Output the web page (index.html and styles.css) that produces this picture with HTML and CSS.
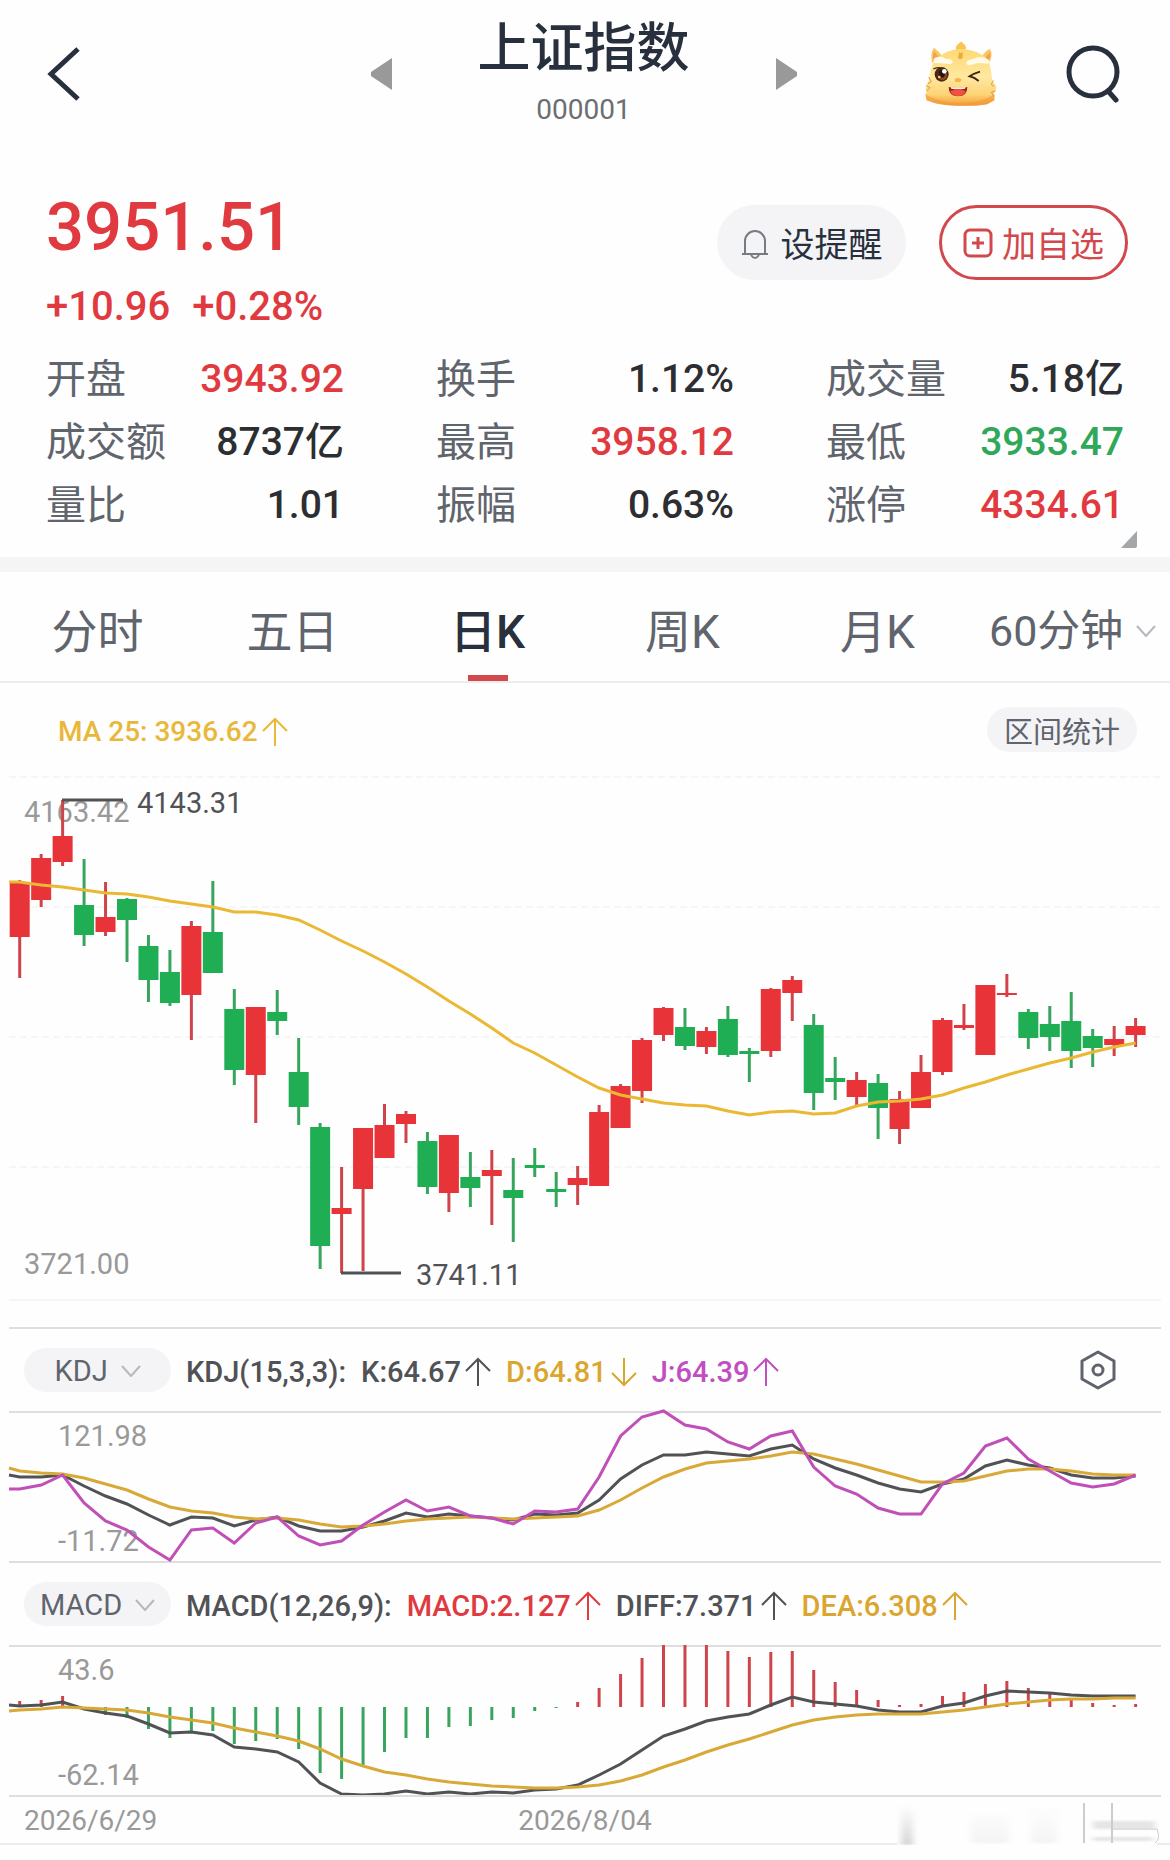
FILE: index.html
```html
<!DOCTYPE html>
<html lang="zh-CN">
<head>
    <meta charset="UTF-8">
    <meta name="viewport" content="width=device-width, initial-scale=1.0">
    <title>上证指数 000001</title>
    <link rel="stylesheet" href="styles.css">
</head>
<body>
    <!-- Shared icons -->
    <svg class="sprite" aria-hidden="true">
        <symbol id="up" viewBox="0 0 26 30"><path d="M13 29V2M1 14L13 2l12 12" fill="none" stroke="currentColor" stroke-width="2"/></symbol>
        <symbol id="down" viewBox="0 0 26 30"><path d="M13 1v27M1 16l12 12 12-12" fill="none" stroke="currentColor" stroke-width="2"/></symbol>
        <symbol id="chevron" viewBox="0 0 20 12"><path d="M1 1l9 10 9-10" fill="none" stroke="currentColor" stroke-width="2"/></symbol>
    </svg>

    <header class="header">
        <button class="icon-btn" aria-label="返回">
            <svg width="33" height="56" viewBox="0 0 33 56"><path d="M31 3L4 28l27 25" fill="none" stroke="#27303c" stroke-width="5"/></svg>
        </button>
        <div class="title-nav">
            <button class="icon-btn" aria-label="上一个">
                <svg width="21" height="32" viewBox="0 0 21 32"><path d="M21 0v32L0 18q-1-2 0-4z" fill="#999"/></svg>
            </button>
            <div class="title">
                <h1>上证指数</h1>
                <p>000001</p>
            </div>
            <button class="icon-btn" aria-label="下一个">
                <svg width="21" height="32" viewBox="0 0 21 32"><path d="M0 0v32l21-14q1-2 0-4z" fill="#999"/></svg>
            </button>
        </div>
        <div class="header-tools">
            <button class="icon-btn" aria-label="助手">
                <svg width="74" height="66" viewBox="0 0 222 198">
                    <defs>
                        <linearGradient id="face" x1="0" y1="0" x2="0" y2="1">
                            <stop offset="0" stop-color="#ffd873"/>
                            <stop offset=".5" stop-color="#ffe8a0"/>
                            <stop offset=".8" stop-color="#fdd476"/>
                            <stop offset="1" stop-color="#f49a35"/>
                        </linearGradient>
                    </defs>
                    <path d="M24 66Q18 36 30 20q14 10 24 26zM196 66q12-26 2-42-16 6-26 26z" fill="#fbc45f"/>
                    <path d="M28 60q-3-20 3-28l14 18zM193 60q8-16 5-26l-14 16z" fill="#f2a052"/>
                    <path d="M96 26q-3-12 10-20 6-8 10 0 14 8 8 22z" fill="#f8c557"/>
                    <path d="M30 60Q60 26 110 24q56 2 84 34 8 30 12 66 14 6 10 22l-6 12 2 20-22 12Q150 196 112 194 50 196 8 178L4 160l4-6q-8-18 6-34 4-32 16-60z" fill="url(#face)"/>
                    <path d="M4 160q34 22 100 26 70 0 108-26l-2 18-22 12Q150 196 112 194 50 196 8 178z" fill="#f29a3a" opacity=".6"/>
                    <path d="M14 108l8 14-10 6M8 134l10 6-10 10M208 118l-6 12 8 6M214 150l-12 4 8 12" fill="none" stroke="#d99a33" stroke-width="3"/>
                    <path d="M106 32q6 8 10 0v18q-8 8-14 0z" fill="#e9ad3c"/>
                    <path d="M30 66q-6-16 12-18 14-2 24 6 18-2 20 8 0 8-14 7-20-3-42-3zM128 70q-4-10 10-14 14-2 22-7 24-3 36 10 4 10-10 9-24-6-44 4-10 2-14-2z" fill="#fffbe9"/>
                    <path d="M28 84q8-4 20-4" fill="none" stroke="#4b2815" stroke-width="4"/>
                    <ellipse cx="53" cy="100" rx="21" ry="22" fill="#4b2815"/>
                    <ellipse cx="55" cy="103" rx="14" ry="15" fill="#8d4b1e"/>
                    <ellipse cx="53" cy="99" rx="10" ry="11" fill="#2b1510"/>
                    <circle cx="61" cy="91" r="7" fill="#fff"/>
                    <circle cx="46" cy="108" r="4" fill="#f5c58b"/>
                    <path d="M168 92q-20 6-31 14 14 3 27 14" fill="none" stroke="#3d2413" stroke-width="6"/>
                    <ellipse cx="102" cy="117" rx="10" ry="6" fill="#f5b54c"/>
                    <path d="M74 138q28 6 56 0 0 28-28 28T74 138z" fill="#a31d1c"/>
                    <path d="M80 138q22 4 45 0l-2 5q-20 4-41 0z" fill="#fff3e0"/>
                    <path d="M79 150q22-8 46 0-4 15-23 15t-23-15z" fill="#f0523f"/>
                </svg>
            </button>
            <button class="icon-btn" aria-label="搜索">
                <svg width="54" height="58" viewBox="0 0 54 58"><circle cx="27" cy="27" r="24" fill="none" stroke="#27303c" stroke-width="5"/><path d="M42 46l8 9" stroke="#27303c" stroke-width="5" stroke-linecap="round"/></svg>
            </button>
        </div>
    </header>

    <section class="quote">
        <div class="quote-top">
            <div>
                <div class="price">3951.51</div>
                <div class="change"><span>+10.96</span><span>+0.28%</span></div>
            </div>
            <div class="actions">
                <button class="btn btn-alert">
                    <svg width="28" height="32" viewBox="0 0 28 32" fill="none" stroke="#777b82" stroke-width="2"><path d="M1 27h26M4 27V14a10 10 0 0 1 20 0v13M10 28q4 6 8 0"/></svg>
                    设提醒
                </button>
                <button class="btn btn-add">
                    <svg width="30" height="30" viewBox="0 0 30 30" fill="none" stroke="currentColor" stroke-width="3"><rect x="2" y="2" width="26" height="26" rx="5"/><path d="M15 9v12M9 15h12"/></svg>
                    加自选
                </button>
            </div>
        </div>
        <dl class="stats">
            <div><dt>开盘</dt><dd class="up">3943.92</dd></div>
            <div><dt>换手</dt><dd>1.12%</dd></div>
            <div><dt>成交量</dt><dd>5.18亿</dd></div>
            <div><dt>成交额</dt><dd>8737亿</dd></div>
            <div><dt>最高</dt><dd class="up">3958.12</dd></div>
            <div><dt>最低</dt><dd class="down">3933.47</dd></div>
            <div><dt>量比</dt><dd>1.01</dd></div>
            <div><dt>振幅</dt><dd>0.63%</dd></div>
            <div><dt>涨停</dt><dd class="up">4334.61</dd></div>
        </dl>
        <svg class="corner" width="16" height="17" viewBox="0 0 16 17"><path d="M16 0v15q0 2-2 2H0z" fill="#a3a7a9"/></svg>
    </section>

    <nav class="tabs">
        <button>分时</button>
        <button>五日</button>
        <button class="active">日K</button>
        <button>周K</button>
        <button>月K</button>
        <label class="picker">
            <select aria-label="分钟周期"><option>60分钟</option></select>
            <svg width="20" height="12"><use href="#chevron"/></svg>
        </label>
    </nav>

    <main class="charts">
        <div class="ma-row">
            <span class="reading gold">MA 25: 3936.62<svg width="26" height="30"><use href="#up"/></svg></span>
            <button class="range-btn">区间统计</button>
        </div>
        <svg id="kline" class="plot" viewBox="9 752 1152 575" role="img" aria-label="日K线图"></svg>

        <div class="panel-head">
            <label class="picker pill">
                <select aria-label="指标一"><option>KDJ</option></select>
                <svg width="20" height="12"><use href="#chevron"/></svg>
            </label>
            <span class="reading">KDJ(15,3,3):</span>
            <span class="reading">K:64.67<svg width="26" height="30"><use href="#up"/></svg></span>
            <span class="reading amber">D:64.81<svg width="26" height="30"><use href="#down"/></svg></span>
            <span class="reading purple">J:64.39<svg width="26" height="30"><use href="#up"/></svg></span>
            <button class="icon-btn settings" aria-label="指标设置">
                <svg width="36" height="40" viewBox="0 0 36 40" fill="none" stroke="#5d646e" stroke-width="3" stroke-linejoin="round"><path d="M18 2l16 9v18l-16 9-16-9V11z"/><circle cx="18" cy="20" r="5"/></svg>
            </button>
        </div>
        <svg id="kdj" class="plot" viewBox="9 1413 1152 148" role="img" aria-label="KDJ"></svg>

        <div class="panel-head">
            <label class="picker pill">
                <select aria-label="指标二"><option>MACD</option></select>
                <svg width="20" height="12"><use href="#chevron"/></svg>
            </label>
            <span class="reading">MACD(12,26,9):</span>
            <span class="reading red">MACD:2.127<svg width="26" height="30"><use href="#up"/></svg></span>
            <span class="reading">DIFF:7.371<svg width="26" height="30"><use href="#up"/></svg></span>
            <span class="reading amber">DEA:6.308<svg width="26" height="30"><use href="#up"/></svg></span>
        </div>
        <svg id="macd" class="plot" viewBox="9 1647 1152 148" role="img" aria-label="MACD"></svg>
    </main>

    <footer class="dates">
        <span>2026/6/29</span>
        <span>2026/8/04</span>
        <svg class="smudge" width="264" height="48" viewBox="0 0 264 48">
            <defs>
                <filter id="soft"><feGaussianBlur stdDeviation="3 1"/></filter>
                <linearGradient id="fade" x1="0" y1="0" x2="0" y2="1">
                    <stop offset="0" stop-color="#bbb" stop-opacity="0"/>
                    <stop offset="1" stop-color="#bbb" stop-opacity=".6"/>
                </linearGradient>
            </defs>
            <rect width="260" height="46" fill="#fefefe"/>
            <g filter="url(#soft)">
                <rect x="4" y="4" width="12" height="40" fill="url(#fade)"/>
                <path d="M74 14h38v28H74zM134 6h26v36h-26z" fill="url(#fade)" opacity=".25"/>
                <path d="M196 20h62v8h-62zM196 36h60v4h-60z" fill="#ccc" opacity=".5"/>
            </g>
            <path d="M187 2v40M215 2v40" stroke="#ccc" stroke-width="2"/>
            <path d="M216 28h44q4 10-2 14" fill="none" stroke="#ccc" stroke-width="1"/>
        </svg>
    </footer>

    <script src="charts.js"></script>
</body>
</html>
```
FILE: styles.css
```css
:root {
    --red: #e03a40;
    --green: #2fa85a;
    --dark: #27303c;
    --grey: #60656d;
    --amber: #dba62f;
    --pill: #f4f4f7;
    --rule: #dedede;
}

* {
    margin: 0;
    padding: 0;
    box-sizing: border-box;
}

body {
    font-family: Roboto, "Noto Sans CJK SC", sans-serif;
    background-color: #fefefe;
    color: #2c2e31;
}

button, select {
    font: inherit;
    color: inherit;
    background: none;
    border: none;
    cursor: pointer;
}

svg {
    display: block;
    flex-shrink: 0;
}

.sprite {
    position: absolute;
    width: 0;
    height: 0;
}

/* Header */
.header {
    display: grid;
    grid-template-columns: 1fr auto 1fr;
    align-items: center;
    padding: 20px 50px 0 47px;
}

.icon-btn {
    justify-self: start;
}

.title-nav {
    display: flex;
    align-items: center;
    gap: 86px;
}

.title {
    text-align: center;
}

.title h1 {
    margin-bottom: 14px;
    font-size: 53px;
    line-height: 58px;
    font-weight: 500;
    color: var(--dark);
}

.title p {
    font-size: 28px;
    line-height: 36px;
    color: #6b6e73;
}

.header-tools {
    display: flex;
    align-items: center;
    justify-content: flex-end;
    gap: 68px;
}

/* Quote */
.quote {
    position: relative;
    padding: 61px 46px 20px;
    border-bottom: 15px solid #f5f5f5;
}

.quote-top {
    display: flex;
    justify-content: space-between;
}

.price {
    margin-bottom: 20px;
    font-size: 67px;
    line-height: 76px;
    font-weight: 500;
    color: var(--red);
}

.change {
    display: flex;
    gap: 22px;
    font-size: 40px;
    line-height: 44px;
    font-weight: 500;
    color: var(--red);
}

.actions {
    display: flex;
    gap: 33px;
    margin: 16px -4px 0 0;
}

.btn {
    display: flex;
    align-items: center;
    justify-content: center;
    gap: 12px;
    width: 189px;
    height: 75px;
    border-radius: 38px;
    font-size: 34px;
    color: var(--dark);
}

.btn-alert {
    background-color: var(--pill);
}

.btn-add {
    gap: 9px;
    border: 3px solid #d2484d;
    color: #d2484d;
}

.stats {
    display: grid;
    grid-template-columns: repeat(3, 1fr);
    column-gap: 92px;
    margin-top: 19px;
    font-size: 40px;
    line-height: 63px;
}

.stats div {
    display: flex;
    justify-content: space-between;
}

.stats dt {
    color: var(--grey);
}

.stats dd {
    font-size: 39px;
    font-weight: 500;
}

.stats .up {
    color: var(--red);
}

.stats .down {
    color: var(--green);
}

.corner {
    position: absolute;
    right: 33px;
    bottom: 9px;
}

/* Period tabs */
.tabs {
    display: grid;
    grid-template-columns: repeat(6, 1fr);
    height: 111px;
    border-bottom: 2px solid #ececec;
    font-size: 46px;
    color: var(--grey);
}

.tabs button {
    padding-top: 2px;
}

.tabs .active {
    position: relative;
    font-weight: 500;
    color: var(--dark);
}

.tabs .active::after {
    content: "";
    position: absolute;
    left: calc(50% - 20px);
    bottom: 0;
    width: 40px;
    height: 6px;
    background-color: #d2484d;
}

.tabs .picker {
    padding-top: 8px;
    font-size: 43px;
}

.picker {
    display: flex;
    align-items: center;
    justify-content: center;
    gap: 12px;
    color: var(--grey);
}

.picker select {
    appearance: none;
}

.picker svg {
    color: #b5b8bc;
}

/* Charts */
.charts {
    padding: 0 9px;
}

.ma-row {
    display: flex;
    align-items: center;
    justify-content: space-between;
    padding: 24px 24px 0 49px;
}

.range-btn {
    width: 150px;
    height: 45px;
    border-radius: 23px;
    background-color: var(--pill);
    font-size: 29px;
    color: var(--grey);
}

.plot {
    width: 100%;
    height: auto;
    overflow: visible;
    font-size: 29px;
}

.panel-head {
    display: flex;
    align-items: center;
    gap: 15px;
    height: 86px;
    padding: 0 45px 0 15px;
    border-top: 2px solid var(--rule);
    border-bottom: 2px solid var(--rule);
}

.pill {
    width: 147px;
    height: 44px;
    padding-top: 2px;
    border-radius: 22px;
    background-color: var(--pill);
    font-size: 29px;
}

.reading {
    display: flex;
    align-items: center;
    gap: 4px;
    padding-top: 4px;
    font-size: 29px;
    font-weight: 500;
    color: #505256;
    white-space: nowrap;
}

.gold {
    font-size: 28px;
    color: #e9b83a;
}

.amber {
    color: var(--amber);
}

.purple {
    color: #c04fc0;
}

.red {
    color: var(--red);
}

.settings {
    margin-left: auto;
}

.axis {
    fill: #999;
}

.mark {
    fill: #505256;
}

/* Dates */
.dates {
    position: relative;
    display: grid;
    grid-template-columns: 1fr auto 1fr;
    padding: 4px 24px 0;
    border-bottom: 2px solid #ececec;
    background: linear-gradient(var(--rule), var(--rule)) 9px 0 / calc(100% - 18px) 2px no-repeat;
    font-size: 28px;
    line-height: 44px;
    color: #999;
}

.smudge {
    position: absolute;
    right: 9px;
    bottom: -6px;
}
```
FILE: charts.js
```js
const RED = '#e83339';
const GREEN = '#1fae54';
const STEP = 21.46;

// [high, body top, body bottom, low, direction]
const candles = [
    [880, 882, 937, 978, 1], [854, 858, 900, 907, 1], [800, 836, 862, 866, 1], [859, 905, 935, 946, 0],
    [882, 917, 932, 936, 1], [898, 899, 920, 962, 0], [935, 946, 980, 1002, 0], [950, 972, 1003, 1006, 0],
    [921, 926, 995, 1040, 1], [881, 932, 973, 973, 0], [989, 1009, 1070, 1085, 0], [1007, 1007, 1075, 1123, 1],
    [990, 1012, 1021, 1035, 0], [1038, 1072, 1107, 1125, 0], [1123, 1127, 1246, 1269, 0], [1167, 1208, 1214, 1273, 1],
    [1128, 1128, 1189, 1271, 1], [1104, 1125, 1158, 1158, 1], [1111, 1114, 1124, 1143, 1], [1132, 1141, 1187, 1194, 0],
    [1135, 1135, 1193, 1212, 1], [1152, 1177, 1188, 1207, 0], [1150, 1170, 1176, 1225, 1], [1158, 1190, 1198, 1242, 0],
    [1148, 1165, 1168, 1177, 0], [1172, 1189, 1192, 1207, 0], [1166, 1178, 1185, 1205, 1], [1105, 1112, 1186, 1186, 1],
    [1084, 1086, 1128, 1128, 1], [1038, 1040, 1091, 1103, 1], [1007, 1008, 1035, 1041, 1], [1008, 1027, 1046, 1050, 0],
    [1027, 1031, 1047, 1054, 1], [1006, 1019, 1055, 1057, 0], [1048, 1051, 1054, 1082, 0], [988, 989, 1051, 1057, 1],
    [976, 980, 993, 1021, 1], [1014, 1025, 1093, 1110, 0], [1057, 1078, 1082, 1100, 0], [1072, 1080, 1097, 1105, 1],
    [1074, 1083, 1108, 1139, 0], [1091, 1099, 1129, 1144, 1], [1055, 1072, 1108, 1108, 1], [1018, 1020, 1072, 1075, 1],
    [1004, 1025, 1028, 1030, 1], [985, 985, 1055, 1055, 1], [974, 993, 995, 997, 1], [1009, 1012, 1038, 1049, 0],
    [1006, 1024, 1037, 1051, 0], [992, 1021, 1051, 1068, 0], [1029, 1036, 1048, 1067, 0], [1026, 1039, 1045, 1056, 1],
    [1018, 1026, 1035, 1047, 1]
];

// The first value of each line is where it enters at the left edge
const ma = [882, 882, 885, 887, 890, 893, 894, 897, 901, 904, 907, 912, 912, 915, 920, 930, 941, 951, 962, 974, 987, 1001, 1014, 1028, 1043, 1053, 1065, 1077, 1088, 1095, 1099, 1103, 1105, 1106, 1111, 1115, 1112, 1111, 1114, 1113, 1106, 1102, 1101, 1099, 1095, 1088, 1082, 1075, 1069, 1063, 1058, 1052, 1047, 1043];
const k = [1475, 1477, 1477, 1475, 1486, 1496, 1504, 1515, 1525, 1517, 1518, 1526, 1520, 1517, 1526, 1531, 1531, 1527, 1521, 1513, 1517, 1514, 1516, 1518, 1520, 1514, 1515, 1513, 1500, 1479, 1465, 1455, 1455, 1452, 1454, 1456, 1449, 1445, 1459, 1468, 1475, 1483, 1489, 1492, 1484, 1479, 1466, 1460, 1465, 1468, 1475, 1478, 1478, 1476];
const d = [1468, 1471, 1473, 1474, 1478, 1484, 1490, 1499, 1507, 1511, 1513, 1517, 1519, 1518, 1520, 1524, 1527, 1526, 1524, 1521, 1519, 1518, 1517, 1518, 1519, 1518, 1517, 1516, 1510, 1500, 1488, 1477, 1469, 1463, 1461, 1459, 1456, 1452, 1454, 1459, 1464, 1470, 1476, 1482, 1482, 1481, 1476, 1471, 1469, 1469, 1471, 1474, 1475, 1475];
const j = [1489, 1489, 1485, 1475, 1503, 1521, 1530, 1547, 1560, 1530, 1528, 1543, 1523, 1517, 1536, 1545, 1541, 1525, 1512, 1500, 1511, 1507, 1516, 1518, 1524, 1511, 1512, 1509, 1477, 1436, 1417, 1411, 1425, 1429, 1442, 1449, 1436, 1431, 1467, 1486, 1494, 1508, 1514, 1514, 1484, 1473, 1446, 1438, 1459, 1471, 1483, 1487, 1484, 1475];
const diff = [1705, 1706, 1705, 1702, 1709, 1713, 1716, 1724, 1733, 1732, 1735, 1747, 1749, 1752, 1762, 1783, 1794, 1795, 1794, 1791, 1794, 1792, 1794, 1792, 1793, 1790, 1789, 1785, 1775, 1764, 1750, 1736, 1729, 1721, 1717, 1714, 1705, 1697, 1702, 1704, 1706, 1710, 1712, 1712, 1706, 1703, 1696, 1691, 1692, 1693, 1695, 1696, 1696, 1696];
const dea = [1711, 1710, 1709, 1707, 1708, 1709, 1710, 1713, 1717, 1720, 1723, 1728, 1732, 1736, 1741, 1749, 1759, 1766, 1772, 1775, 1779, 1782, 1784, 1786, 1787, 1788, 1788, 1787, 1785, 1781, 1775, 1767, 1760, 1752, 1745, 1739, 1732, 1725, 1720, 1717, 1715, 1714, 1714, 1714, 1712, 1710, 1707, 1704, 1702, 1700, 1699, 1699, 1698, 1698];
const bars = [1701, 1700, 1696, 1707, 1715, 1718, 1729, 1738, 1732, 1731, 1744, 1741, 1739, 1749, 1773, 1779, 1765, 1752, 1738, 1738, 1727, 1726, 1720, 1718, 1711, 1708, 1702, 1688, 1674, 1658, 1645, 1645, 1645, 1651, 1657, 1652, 1651, 1670, 1682, 1690, 1700, 1705, 1704, 1696, 1692, 1684, 1681, 1688, 1692, 1700, 1703, 1705, 1704];

const xAt = i => 19.7 + i * STEP;

function line(values, color) {
    const points = values.map((y, i) => `${i ? xAt(i - 1).toFixed(1) : 9},${y}`).join(' ');
    return `<polyline points="${points}" fill="none" stroke="${color}" stroke-width="3"/>`;
}

function text(x, y, label, cls = 'axis') {
    return `<text x="${x}" y="${y}" class="${cls}">${label}</text>`;
}

function drawKline() {
    let out = '';
    [777, 907, 1037, 1167].forEach(y => {
        out += `<path d="M9 ${y}H1161" stroke="#f6f6f6" stroke-width="2" stroke-dasharray="7 4"/>`;
    });
    out += '<path d="M9 1300H1161" stroke="#f6f6f6" stroke-width="2"/>';
    out += text(24, 822, '4163.42') + text(24, 1274, '3721.00');
    candles.forEach(([high, top, bottom, low, rise], i) => {
        const x = xAt(i);
        const color = rise ? RED : GREEN;
        out += `<path d="M${x} ${high}V${low}" stroke="${rise ? '#cf444b' : '#37a65c'}" stroke-width="3"/>`;
        out += `<rect x="${x - 10}" y="${top}" width="20" height="${bottom - top}" fill="${color}"/>`;
    });
    out += line(ma, '#ebb834');
    out += '<path d="M62 800H123M341 1273H401" stroke="#505256" stroke-width="3"/>';
    out += text(137, 813, '4143.31', 'mark') + text(416, 1285, '3741.11', 'mark');
    document.getElementById('kline').innerHTML = out;
}

function drawKdj() {
    document.getElementById('kdj').innerHTML =
        text(58, 1446, '121.98') + text(58, 1551, '-11.72') +
        line(k, '#505256') + line(d, '#d9a938') + line(j, '#c04fb8');
}

function drawMacd() {
    let out = text(58, 1680, '43.6') + text(58, 1785, '-62.14');
    bars.forEach((y, i) => {
        out += `<path d="M${xAt(i)} 1707V${y}" stroke="${y < 1707 ? '#cf444b' : '#37a65c'}" stroke-width="3"/>`;
    });
    out += line(diff, '#505256') + line(dea, '#d9a938');
    document.getElementById('macd').innerHTML = out;
}

drawKline();
drawKdj();
drawMacd();
```
